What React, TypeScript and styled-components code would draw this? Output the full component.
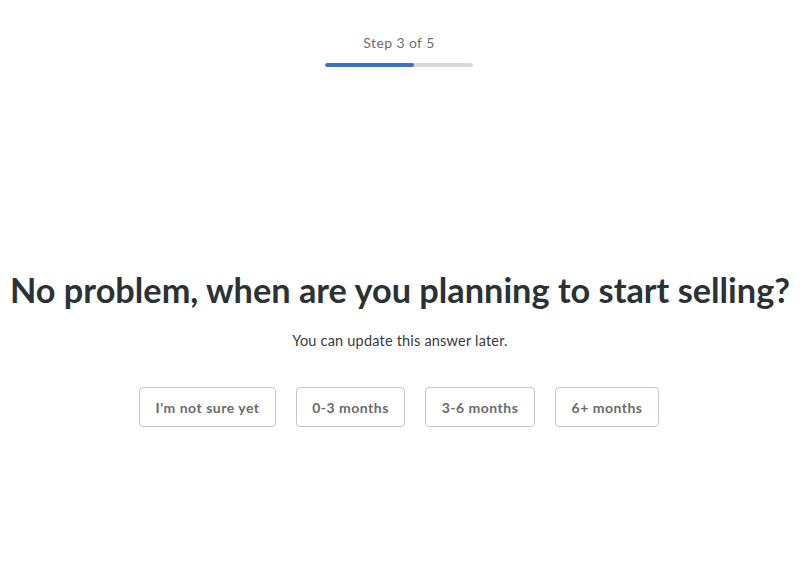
import React from 'react';
import styled, { createGlobalStyle } from 'styled-components';

const GlobalStyle = createGlobalStyle`
  html, body {
    margin: 0;
    padding: 0;
    background: #ffffff;
  }
  body {
    font-family: Lato, "Open Sans", "Liberation Sans", sans-serif;
  }
`;

const Page = styled.div`
  width: 800px;
  height: 577px;
  display: flex;
  flex-direction: column;
  align-items: center;
`;

const Progress = styled.div`
  display: flex;
  flex-direction: column;
  align-items: center;
  padding-top: 34px;
  margin-left: -2px;
`;

const StepLabel = styled.div`
  font-size: 14px;
  letter-spacing: 0.4px;
  color: #6f6f6f;
  line-height: 18px;
`;

const Track = styled.div`
  width: 148px;
  height: 4px;
  margin-top: 11px;
  border-radius: 2px;
  background: #d8d8d8;
  overflow: hidden;
`;

const Fill = styled.div`
  height: 100%;
  background: #3c72c4;
  border-radius: 2px;
`;

const Question = styled.div`
  display: flex;
  flex-direction: column;
  align-items: center;
  margin-top: 201px;
`;

const Heading = styled.h1`
  margin: 0;
  font-size: 34.3px;
  font-weight: 700;
  line-height: 44px;
  color: #2b3236;
  white-space: nowrap;
`;

const Hint = styled.p`
  margin: 20px 0 0;
  font-size: 14.5px;
  letter-spacing: 0.2px;
  line-height: 18px;
  color: #3a3a3a;
`;

const Options = styled.div`
  display: flex;
  gap: 20px;
  margin-top: 37px;
  margin-left: -2px;
`;

const Option = styled.button<{ w: number }>`
  width: ${(p) => p.w}px;
  height: 40px;
  padding: 0;
  border: 1px solid #c4c4c4;
  border-radius: 4px;
  background: #ffffff;
  font-family: inherit;
  font-size: 14px;
  font-weight: 700;
  letter-spacing: 0.5px;
  color: #6a6a6a;
  cursor: pointer;
`;

const options = [
  { label: "I'm not sure yet", w: 137 },
  { label: '0-3 months', w: 109 },
  { label: '3-6 months', w: 110 },
  { label: '6+ months', w: 104 },
];

const App = () => (
  <Page>
    <GlobalStyle />
    <Progress>
      <StepLabel>Step 3 of 5</StepLabel>
      <Track>
        <Fill style={{ width: `${(3 / 5) * 100}%` }} />
      </Track>
    </Progress>
    <Question>
      <Heading>No problem, when are you planning to start selling?</Heading>
      <Hint>You can update this answer later.</Hint>
      <Options>
        {options.map((o) => (
          <Option key={o.label} w={o.w}>{o.label}</Option>
        ))}
      </Options>
    </Question>
  </Page>
);

export default App;
